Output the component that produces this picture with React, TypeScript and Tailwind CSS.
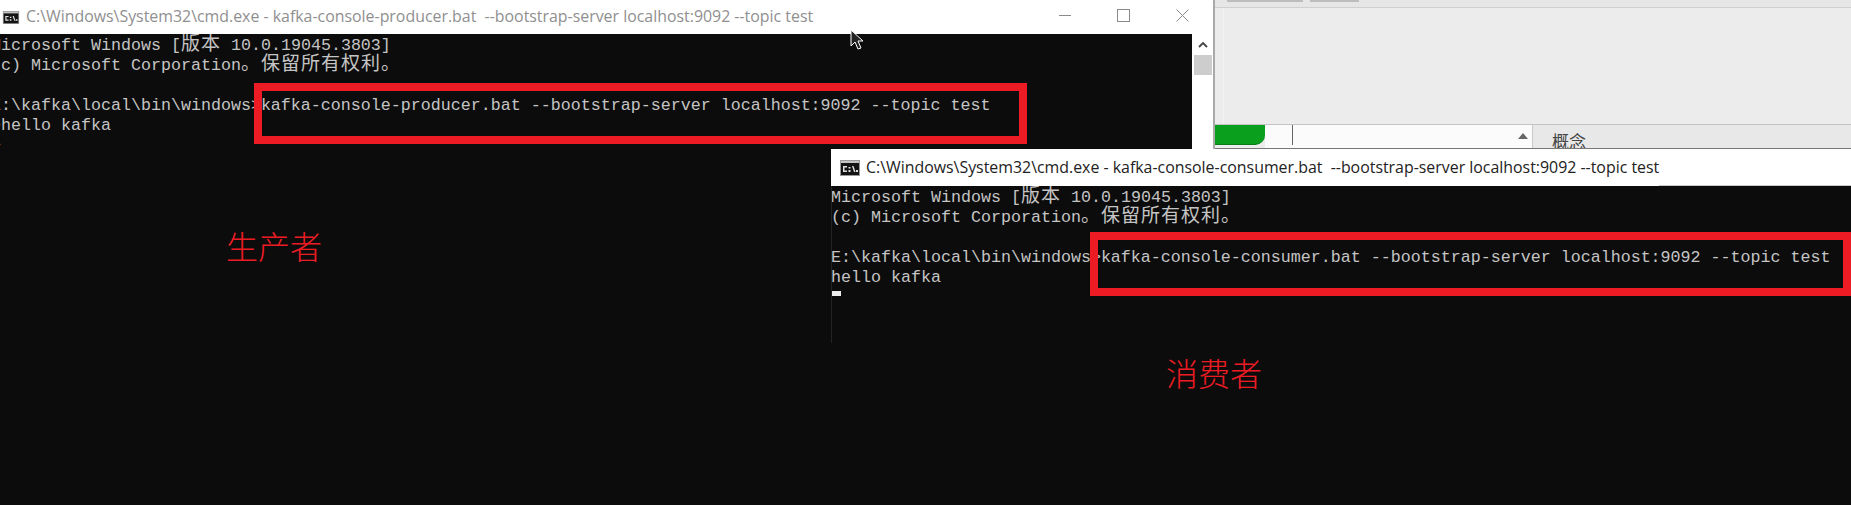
import type { ReactNode } from 'react'

type Line = { text: ReactNode }

// double-width cells in the console: CJK glyphs take 20px against 10px for latin
function Cjk({ children }: { children: ReactNode }) {
  return <span className="font-['Noto_Sans_CJK_SC',sans-serif] text-[19px] leading-[0] tracking-[1px]">{children}</span>
}

function CmdIcon({ className }: { className: string }) {
  return (
    <svg viewBox="0 0 20 16" className={className}>
      <rect x="0" y="0" width="20" height="16" fill="#9a9a9a" />
      <rect x="1" y="1" width="18" height="2" fill="#c4c4c4" />
      <rect x="1" y="3" width="18" height="12" fill="#141414" />
      <path d="M3 6h4v1.5H4.5v3H7V12H3zM8.5 7h2v1.5h-2zM8.5 10h2v2h-2zM12 6h1.5l2 6H14zM16 10h2v2h-2z" fill="#e0e0e0" />
    </svg>
  )
}

function ConsoleText({ lines }: { lines: Line[] }) {
  return (
    <div className="whitespace-pre font-['Liberation_Mono','Noto_Sans_CJK_SC',monospace] text-[16.67px] leading-5 text-[#c4c4c4]">
      {lines.map((line, i) => (
        <div key={i} className="h-5">
          {line.text}
        </div>
      ))}
    </div>
  )
}

function versionLines(command: string, afterHello: ReactNode): Line[] {
  return [
    {
      text: (
        <>
          Microsoft Windows [<Cjk>版本</Cjk> 10.0.19045.3803]
        </>
      ),
    },
    {
      text: (
        <>
          (c) Microsoft Corporation<Cjk>。保留所有权利。</Cjk>
        </>
      ),
    },
    { text: ' ' },
    { text: `E:\\kafka\\local\\bin\\windows>${command}` },
    { text: afterHello },
  ]
}

function RedBox({ className }: { className: string }) {
  return <div className={`absolute border-[8px] border-[#ed1c24] ${className}`} />
}

function BackgroundWindow() {
  return (
    <div className="absolute left-[1213px] right-0 top-0 flex h-[149px] flex-col border-l-2 border-[#a9a9a9] bg-[#ececec]">
      <div className="flex h-[8px] gap-[7px] border-b border-[#cfcfcf] bg-[#e6e6e6] pl-[12px]">
        <div className="h-[2px] w-[76px] bg-[#bdbdbd]" />
        <div className="h-[2px] w-[49px] bg-[#bdbdbd]" />
      </div>
      <div className="flex-1 pl-[8px]">
        <div className="h-full border-l border-[#f3f3f3]" />
      </div>
      <div className="flex h-[25px] border-y border-b-[#777] border-t-[#c4c4c4]">
        <div className="h-[20px] w-[50px] rounded-br-[10px] border-b border-[#0a7c17] bg-[#0aa01e]" />
        <div className="flex w-[267px] bg-[#fbfbfb] pl-[27px]">
          <div className="h-[20px] w-px bg-[#666]" />
          <div className="ml-auto mr-[4px] mt-[8px] h-0 w-0 border-x-[5px] border-b-[6px] border-x-transparent border-b-[#666]" />
        </div>
        <div className="flex-1 overflow-hidden border-l border-[#c8c8c8] bg-[#e8e8e8] pl-[19px] font-['Noto_Sans_CJK_SC',sans-serif] text-[17px] leading-[32px] text-[#444]">
          概念
        </div>
      </div>
    </div>
  )
}

function ProducerWindow() {
  return (
    <div className="absolute inset-y-0 left-0 flex w-[1213px] flex-col bg-white">
      <div className="flex h-[34px] shrink-0 items-center pl-[2px] font-['Open_Sans',sans-serif] text-[15.9px] text-[#8f8f8f]">
        <CmdIcon className="h-[13px] w-[18px]" />
        <span className="ml-[6px] whitespace-pre">
          C:\Windows\System32\cmd.exe - kafka-console-producer.bat  --bootstrap-server localhost:9092 --topic test
        </span>
        <div className="-mt-[4px] ml-auto flex items-center gap-[46px] pr-[24px] text-[#8a8a8a]">
          <div className="h-px w-[12px] bg-current" />
          <div className="size-[13px] border border-current" />
          <svg viewBox="0 0 13 13" className="size-[13px]" stroke="currentColor" fill="none">
            <path d="M0.5 0.5l12 12M12.5 0.5l-12 12" />
          </svg>
        </div>
      </div>
      <div className="flex min-h-0 flex-1">
        <div className="flex-1 overflow-hidden bg-[#0c0c0c] pt-[2px]">
          <div className="-ml-[9px]">
            <ConsoleText
              lines={[
                ...versionLines('kafka-console-producer.bat --bootstrap-server localhost:9092 --topic test', '>hello kafka'),
                { text: '>' },
              ]}
            />
          </div>
        </div>
        <div className="flex w-[21px] flex-col items-center pt-[8px]">
          <svg viewBox="0 0 10 6" className="h-[6px] w-[10px]" stroke="#444" strokeWidth="1.8" fill="none">
            <path d="M1 5l4-4 4 4" />
          </svg>
          <div className="mt-[7px] h-[20px] w-[18px] bg-[#cdcdcd]" />
        </div>
      </div>
    </div>
  )
}

function ConsumerWindow() {
  return (
    <div className="absolute bottom-0 left-[831px] right-0 top-[149px] flex flex-col bg-white">
      <div className="relative flex h-[37px] shrink-0 items-center pl-[9px] font-['Open_Sans',sans-serif] text-[15.9px] text-[#222]">
        <CmdIcon className="h-[16px] w-[20px]" />
        <span className="ml-[6px] whitespace-pre">
          C:\Windows\System32\cmd.exe - kafka-console-consumer.bat  --bootstrap-server localhost:9092 --topic test
        </span>
        <div className="absolute bottom-0 left-[828px] right-0 h-px bg-[#c8c8c8]" />
      </div>
      <div className="min-h-0 flex-1 overflow-hidden bg-[#0c0c0c] pt-[2px]">
        <ConsoleText
          lines={versionLines('kafka-console-consumer.bat --bootstrap-server localhost:9092 --topic test', 'hello kafka')}
        />
        <div className="mt-[3px] h-[5px] w-[10px] bg-[#eeeeee]" />
      </div>
    </div>
  )
}

export default function App() {
  return (
    <div className="relative h-[505px] w-[1851px] overflow-hidden bg-[#0c0c0c]">
      <BackgroundWindow />
      <ProducerWindow />
      <ConsumerWindow />
      <RedBox className="left-[254px] top-[83px] h-[61px] w-[773px]" />
      <RedBox className="left-[1090px] top-[232px] h-[64px] w-[761px]" />
      <div className="absolute left-[226px] top-[225px] font-['Noto_Sans_CJK_SC',serif] text-[32px] font-light leading-[40px] text-[#ed1c24]">
        生产者
      </div>
      <div className="absolute left-[1166px] top-[352px] font-['Noto_Sans_CJK_SC',serif] text-[32px] font-light leading-[40px] text-[#ed1c24]">
        消费者
      </div>
      <div className="absolute left-[831px] top-[186px] h-[157px] w-px bg-[#242424]" />
      <svg viewBox="0 0 14 22" className="absolute left-[850px] top-[29px] h-[22px] w-[14px]">
        <path d="M1 1v16l4-4 3 7 3-1-3-7h5z" fill="#222" stroke="#fff" strokeWidth="1" />
      </svg>
    </div>
  )
}
